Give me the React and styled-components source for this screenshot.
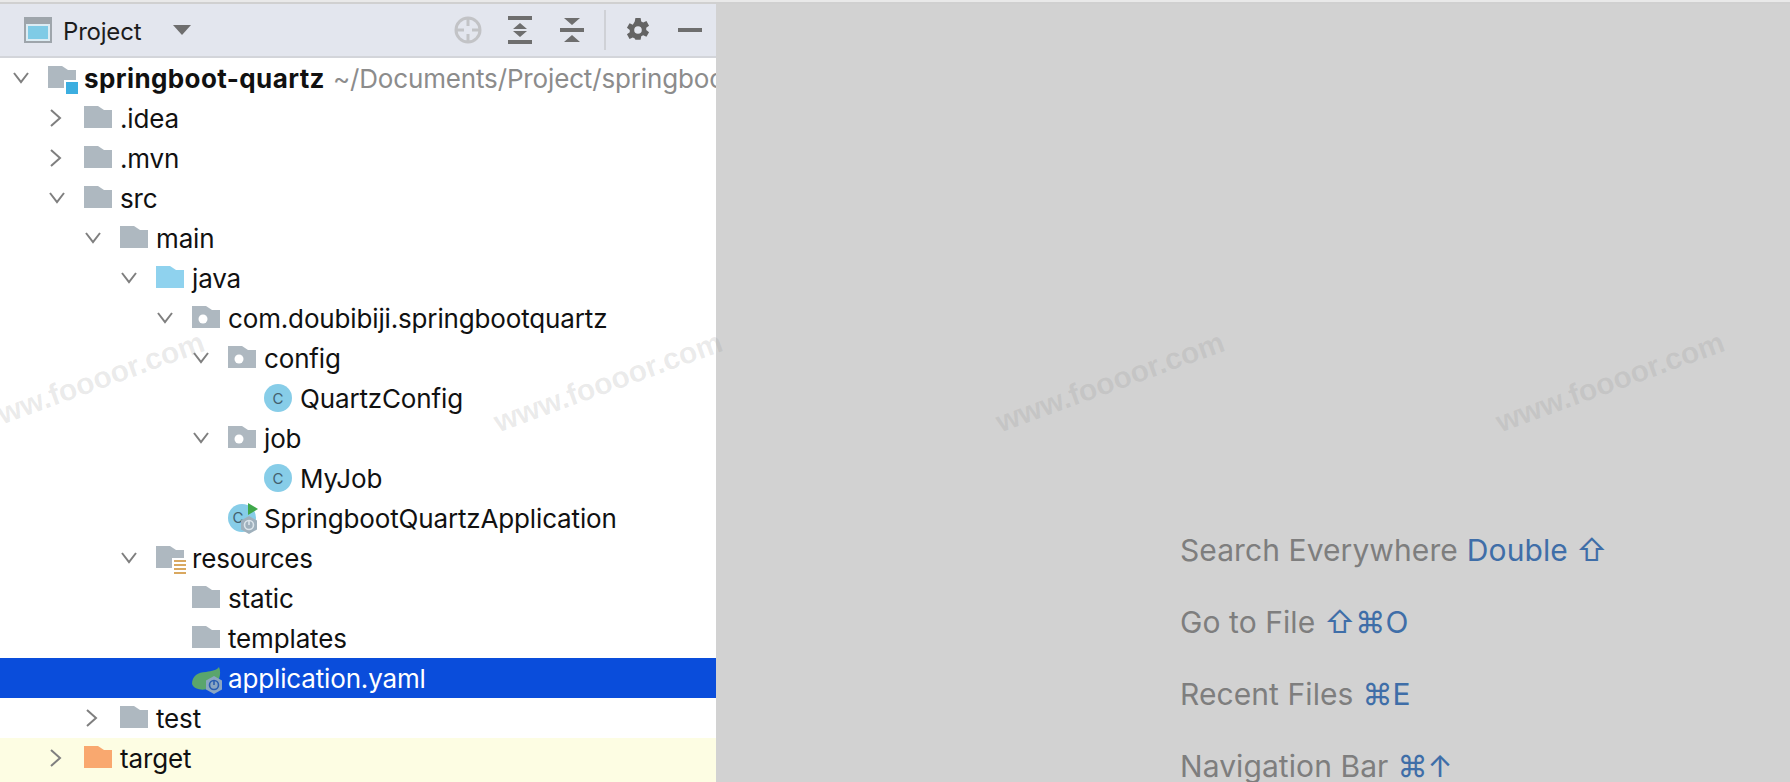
import React from 'react';
import styled, { createGlobalStyle } from 'styled-components';

const Global = createGlobalStyle`
  html, body { margin: 0; padding: 0; height: 100%; overflow: hidden; background: #d2d2d2; }
  body { font-family: Inter, "Liberation Sans", sans-serif; }
`;
const Page = styled.div`
  position: relative; width: 1790px; height: 782px; overflow: hidden;
  display: flex; flex-direction: column; background: #d2d2d2;
`;
const TopStrip = styled.div`
  height: 2px; flex: none; background: #e9e9e9; border-bottom: 2px solid #d0d0d0;
`;
const Body = styled.div`display: flex; flex: 1; min-height: 0;`;
const Side = styled.aside`
  width: 716px; flex: none; background: #fff; display: flex; flex-direction: column;
`;
const Toolbar = styled.header`
  height: 52px; flex: none; display: flex; align-items: center; background: #e3e6ee;
  border-bottom: 2px solid #d3d5da; padding: 0 14px 0 24px;
`;
const ToolTitle = styled.span`
  margin-left: 11px; padding-top: 2px; font-size: 24px; letter-spacing: -0.2px; color: #1c1c1c; width: 110px;
`;
const ToolIcons = styled.div`
  margin-left: auto; display: flex; align-items: center;
`;
const ToolIcon = styled.span`
  display: flex; width: ${p => p.$w}px; justify-content: ${p => p.$end ? 'flex-end' : 'center'}; align-items: center;
`;
const Sep = styled.span`
  width: 2px; height: 40px; background: #cfd1d6; margin: 0 19px 0 18px;
`;
const Tree = styled.div`display: flex; flex-direction: column;`;
const Row = styled.div`
  box-sizing: border-box;
  height: ${p => p.$excluded ? 44 : 40}px; flex: none; display: flex; align-items: center;
  padding-left: ${p => 6 + p.$level * 36}px;
  padding-bottom: ${p => p.$excluded ? 4 : 0}px;
  background: ${p => p.$selected ? '#0a4ddb' : p.$excluded ? '#fdfde3' : 'transparent'};
  color: ${p => p.$selected ? '#fff' : '#111'};
  font-size: 26px; letter-spacing: -0.15px; white-space: nowrap; overflow: hidden;
`;
const Chevron = styled.span`display: flex; width: 28px; height: 28px; flex: none; margin-right: 14px;`;
const IconSlot = styled.span`display: flex; width: 28px; height: 32px; flex: none; margin-right: 8px; align-items: center;`;
const RootName = styled.span`font-weight: 700; letter-spacing: 0.4px;`;
const RootPath = styled.span`margin-left: 8px; color: #8c8c8c;`;
const Editor = styled.main`
  flex: 1; display: flex; flex-direction: column; gap: 35px;
  padding: 528px 0 0 464px; font-size: 30px; line-height: 37px; letter-spacing: 0.08px; color: #7e7e7e; white-space: nowrap;
`;
const Hint = styled.div`display: flex; gap: 9px;`;
const Keys = styled.span`color: #3f6ea8; font-family: Inter, "DejaVu Sans", sans-serif;`;
const Mark = styled.div`
  position: absolute; left: ${p => p.$x}px; top: 382px; transform: translate(-50%, -50%) rotate(-20deg);
  font: 700 30px "Liberation Sans", sans-serif; color: rgba(130,130,130,.16);
  pointer-events: none; white-space: nowrap;
`;

const Folder = ({ color = '#aeb8c0', dot, badge, lines }) => (
  <svg width="28" height="24" viewBox="0 0 28 24" style={{ overflow: 'visible' }}>
    <path d="M0 0h14l6 4h8v18H0z" fill={color} />
    {dot && <circle cx="11" cy="13" r="4.5" fill="#fff" />}
    {badge && <><rect x="16" y="14" width="14" height="15" fill="#fff" /><rect x="18" y="16" width="12" height="12" fill="#3caee0" /></>}
    {lines && <><rect x="16" y="12" width="16" height="18" fill="#fff" />
      {[14, 18, 22, 26].map(y => <rect key={y} x="18" y={y} width="12" height="2" fill="#d9a860" />)}</>}
  </svg>
);
const ClassIcon = () => (
  <svg width="28" height="28" viewBox="0 0 28 28">
    <circle cx="14" cy="14" r="14" fill="#87cde8" />
    <text x="14" y="19.5" textAnchor="middle" fontSize="15" fontFamily="Inter, sans-serif" fill="#43606e">C</text>
  </svg>
);
const Hex = ({ x, y, fill, ring }) => (
  <g transform={`translate(${x} ${y})`}>
    <path d="M0-9l8 4.5v9L0 9l-8-4.5v-9z" fill={fill} />
    <circle r="4.5" fill="none" stroke={ring} strokeWidth="1.6" />
    <path d="M0-4.5v4.5" stroke={ring} strokeWidth="1.6" />
  </g>
);
const AppIcon = () => (
  <svg width="32" height="32" viewBox="0 0 32 32" style={{ overflow: 'visible' }}>
    <circle cx="14" cy="16" r="14" fill="#87cde8" />
    <text x="10" y="21" textAnchor="middle" fontSize="15" fontFamily="Inter, sans-serif" fill="#43606e">C</text>
    <path d="M20 1l10 6-10 6z" fill="#3fa84a" />
    <Hex x={21} y={23} fill="#9fb0bc" ring="#dbe4ea" />
  </svg>
);
const LeafIcon = () => (
  <svg width="32" height="32" viewBox="0 0 32 32" style={{ overflow: 'visible' }}>
    <path d="M0 22C0 14 6 10 14 10c6-1 11-2 13-5 3 7 0 17-9 21-6 3-16 2-18-4z" fill="#5aa56c" />
    <Hex x={22} y={23} fill="#8aa6c2" ring="#2a5db0" />
  </svg>
);
const Down = () => (
  <svg width="28" height="28" viewBox="0 0 28 28"><path d="M8 9l7 9 7-9" fill="none" stroke="#7f7f7f" strokeWidth="2" /></svg>
);
const Right = () => (
  <svg width="28" height="28" viewBox="0 0 28 28"><path d="M9 6l9 8-9 8" fill="none" stroke="#7f7f7f" strokeWidth="2" /></svg>
);

const rows = [
  { level: 0, open: true, icon: <Folder badge />, root: true },
  { level: 1, open: false, icon: <Folder />, name: '.idea' },
  { level: 1, open: false, icon: <Folder />, name: '.mvn' },
  { level: 1, open: true, icon: <Folder />, name: 'src' },
  { level: 2, open: true, icon: <Folder />, name: 'main' },
  { level: 3, open: true, icon: <Folder color="#8fd2ee" />, name: 'java' },
  { level: 4, open: true, icon: <Folder dot />, name: 'com.doubibiji.springbootquartz' },
  { level: 5, open: true, icon: <Folder dot />, name: 'config' },
  { level: 6, icon: <ClassIcon />, name: 'QuartzConfig' },
  { level: 5, open: true, icon: <Folder dot />, name: 'job' },
  { level: 6, icon: <ClassIcon />, name: 'MyJob' },
  { level: 5, icon: <AppIcon />, name: 'SpringbootQuartzApplication' },
  { level: 3, open: true, icon: <Folder lines />, name: 'resources' },
  { level: 4, icon: <Folder />, name: 'static' },
  { level: 4, icon: <Folder />, name: 'templates' },
  { level: 4, icon: <LeafIcon />, name: 'application.yaml', selected: true },
  { level: 2, open: false, icon: <Folder />, name: 'test' },
  { level: 1, open: false, icon: <Folder color="#f9a86f" />, name: 'target', excluded: true },
];

const hints = [
  ['Search Everywhere', 'Double ⇧'],
  ['Go to File', '⇧⌘O'],
  ['Recent Files', '⌘E'],
  ['Navigation Bar', '⌘↑'],
];

export default function App() {
  return (
    <Page>
      <Global />
      <TopStrip />
      <Body>
        <Side>
          <Toolbar>
            <svg width="28" height="26" viewBox="0 0 28 26">
              <rect width="28" height="26" fill="#9ea5ab" />
              <rect x="2" y="7" width="24" height="17" fill="#dcecf3" />
              <rect x="4" y="9" width="20" height="13" fill="#7fcbe6" />
            </svg>
            <ToolTitle>Project</ToolTitle>
            <svg width="18" height="10" viewBox="0 0 18 10"><path d="M0 0h18l-9 10z" fill="#6e6e6e" /></svg>
            <ToolIcons>
              <ToolIcon $w={28}>
                <svg width="28" height="28" viewBox="0 0 28 28">
                  <circle cx="14" cy="14" r="12" fill="none" stroke="#c2c3c6" strokeWidth="3" />
                  <path d="M14 2v8M14 18v8M2 14h8M18 14h8" stroke="#c2c3c6" strokeWidth="3" />
                </svg>
              </ToolIcon>
              <ToolIcon $w={76}>
                <svg width="24" height="28" viewBox="0 0 24 28" fill="#6e6e6e">
                  <rect width="24" height="4" /><rect y="24" width="24" height="4" />
                  <path d="M12 7l7 6H5zM12 21l7-6H5z" />
                </svg>
              </ToolIcon>
              <ToolIcon $w={28}>
                <svg width="24" height="26" viewBox="0 0 24 26" fill="#6e6e6e">
                  <rect y="11" width="24" height="4" />
                  <path d="M4 1h16l-8 7zM4 25h16l-8-7z" />
                </svg>
              </ToolIcon>
              <Sep />
              <ToolIcon $w={26}>
                <svg width="26" height="26" viewBox="0 0 24 24">
                  <path fill="#646464" fillRule="evenodd" d="M9.6 1h4.8l.6 3.2 1.8.9 3-1.3 2.4 4.2-2.6 2 0 2 2.6 2-2.4 4.2-3-1.3-1.8.9-.6 3.2H9.6L9 19.8l-1.8-.9-3 1.3-2.4-4.2 2.6-2v-2l-2.6-2 2.4-4.2 3 1.3L9 4.2zM12 8.5a3.5 3.5 0 1 0 0 7 3.5 3.5 0 0 0 0-7z" />
                </svg>
              </ToolIcon>
              <ToolIcon $w={51} $end>
                <svg width="24" height="4" viewBox="0 0 24 4"><rect width="24" height="4" fill="#6e6e6e" /></svg>
              </ToolIcon>
            </ToolIcons>
          </Toolbar>
          <Tree>
            {rows.map((r, i) => (
              <Row key={i} $level={r.level} $selected={r.selected} $excluded={r.excluded}>
                <Chevron>{r.open === true ? <Down /> : r.open === false ? <Right /> : null}</Chevron>
                <IconSlot>{r.icon}</IconSlot>
                {r.root ? <>
                  <RootName>springboot-quartz</RootName>
                  <RootPath>~/Documents/Project/springboot-quartz</RootPath>
                </> : r.name}
              </Row>
            ))}
          </Tree>
        </Side>
        <Editor>
          {hints.map(([a, b]) => <Hint key={a}><span>{a}</span><Keys>{b}</Keys></Hint>)}
        </Editor>
      </Body>
      {[90, 608, 1110, 1610].map(x => <Mark key={x} $x={x}>www.foooor.com</Mark>)}
    </Page>
  );
}
